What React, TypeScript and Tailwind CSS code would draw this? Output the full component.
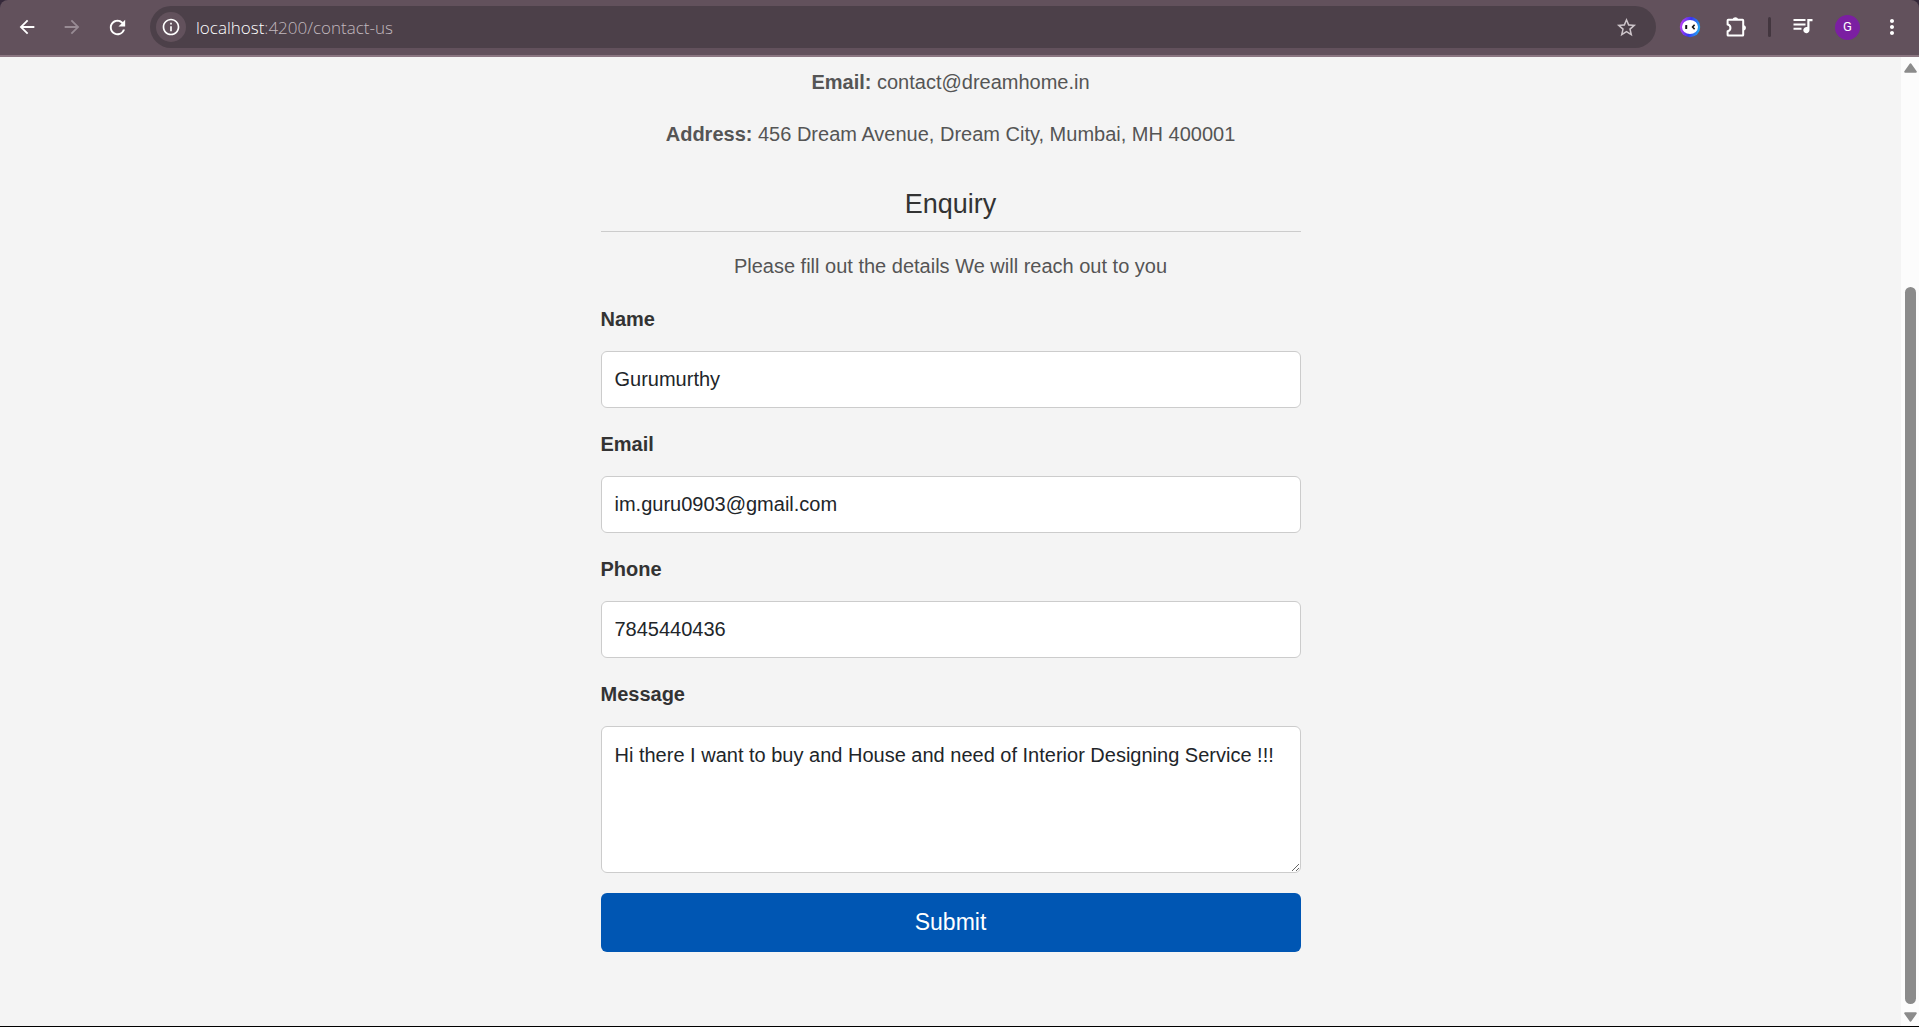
import React from 'react';
import {
  MdArrowBack,
  MdArrowForward,
  MdInfoOutline,
  MdMoreVert,
  MdRefresh,
  MdStarBorder,
} from 'react-icons/md';

function AssistantIcon() {
  return (
    <svg viewBox="0 0 22 22" className="size-[22px]" aria-hidden="true">
      <defs>
        <linearGradient id="ring" x1="0" y1="0.6" x2="1" y2="0.8">
          <stop offset="0" stopColor="#b63df5" />
          <stop offset="0.45" stopColor="#3a35f0" />
          <stop offset="1" stopColor="#19b8f5" />
        </linearGradient>
      </defs>
      <circle cx="11" cy="11" r="10.2" fill="url(#ring)" />
      <ellipse cx="11" cy="11" rx="8" ry="7" fill="#fff" />
      <rect x="6.2" y="9" width="2" height="4" rx="0.6" fill="#111" />
      <path d="M15.6 8.8 L13.6 11 L15.6 13.2" fill="none" stroke="#111" strokeWidth="1.6" />
    </svg>
  );
}

function PuzzleIcon() {
  return (
    <svg viewBox="0 0 24 24" className="size-6" fill="none" aria-hidden="true">
      <path
        d="M4.2 4.8 H18.6 Q19.2 4.8 19.2 5.4 V20 Q19.2 20.6 18.6 20.6 H4.2 Q3.6 20.6 3.6 20 V16.2 C7.4 15.4 7.4 10.4 3.6 9.6 V5.4 Q3.6 4.8 4.2 4.8 Z"
        stroke="#fff"
        strokeWidth="2"
        strokeLinejoin="round"
      />
      <path d="M8.8 4.6 C8.8 1.4 14 1.4 14 4.6 Z M19.4 10.2 C22.8 10.2 22.8 15.4 19.4 15.4 Z" fill="#fff" />
    </svg>
  );
}

function MediaIcon() {
  return (
    <svg viewBox="0 0 24 24" className="size-6" fill="#fff" aria-hidden="true">
      <path d="M2.5 4H14.5V6H2.5Z M2.5 8.4H14.5V10.4H2.5Z M2.5 12.8H10.5V14.8H2.5Z" />
      <path d="M16.3 4H21.5V6.2H18.5V15A3.1 3.1 0 1 1 16.3 12.1Z" />
    </svg>
  );
}

function BrowserBar() {
  return (
    <div className="bg-[#35293a]">
      <header className="flex h-[57px] items-center rounded-t-lg border-b-2 border-[#8b7681] bg-[#62515c] pr-[15px] pb-px pl-4 text-white">
        <nav className="flex items-center gap-[23px]" aria-label="Browser">
          <button type="button" aria-label="Back">
            <MdArrowBack className="size-[22px]" />
          </button>
          <button type="button" aria-label="Forward" className="text-[#988b94]">
            <MdArrowForward className="size-[22px]" />
          </button>
          <button type="button" aria-label="Reload">
            <MdRefresh className="size-[23px]" />
          </button>
        </nav>
        <div className="ml-[21px] flex h-[42px] min-w-0 flex-1 items-center rounded-full bg-[#4c4049] pr-[18px] pl-1.5">
          <button
            type="button"
            aria-label="Site information"
            className="flex size-[30px] items-center justify-center rounded-full bg-[#62515c]"
          >
            <MdInfoOutline className="size-5" />
          </button>
          <p className="ml-2.5 flex-1 pt-0.5 font-['Open_Sans','Noto_Sans',sans-serif] text-[17px] leading-6 font-light text-[#c1b8be]">
            <span className="text-white">localhost</span>:4200/contact-us
          </p>
          <button type="button" aria-label="Bookmark this page" className="text-[#cdc5ca]">
            <MdStarBorder className="size-[23px]" />
          </button>
        </div>
        <div className="ml-[22px] flex items-center gap-5">
          <button type="button" aria-label="Assistant" className="mr-0.5 flex size-6 items-center justify-center">
            <AssistantIcon />
          </button>
          <button type="button" aria-label="Extensions">
            <PuzzleIcon />
          </button>
          <span className="h-5 w-[3px] rounded-full bg-[#43363f]" />
          <button type="button" aria-label="Media controls">
            <MediaIcon />
          </button>
          <button
            type="button"
            aria-label="Profile"
            className="flex size-[25px] items-center justify-center rounded-full bg-[#7b1fa2] font-[Roboto,sans-serif] text-[13px]"
          >
            G
          </button>
          <button type="button" aria-label="Menu">
            <MdMoreVert className="size-6" />
          </button>
        </div>
      </header>
    </div>
  );
}

const fields = [
  { id: 'name', label: 'Name', type: 'text', value: 'Gurumurthy' },
  { id: 'email', label: 'Email', type: 'email', value: 'im.guru0903@gmail.com' },
  { id: 'phone', label: 'Phone', type: 'tel', value: '7845440436' },
];

const labelClass = 'mb-4 block font-bold text-[#333]';
const controlClass =
  'block w-full rounded-md border border-[#ccc] bg-white px-[13px] text-[#212529] outline-none';

function ContactPage() {
  return (
    <main className="flex-1 bg-[#f4f4f4] px-5 pt-[9px] font-['Liberation_Sans',Arial,sans-serif] text-[20px] leading-8">
      <div className="mx-auto max-w-[700px]">
        <section className="text-center text-[#555]">
          <p className="mb-5">
            <strong>Email:</strong> contact@dreamhome.in
          </p>
          <p>
            <strong>Address:</strong> 456 Dream Avenue, Dream City, Mumbai, MH 400001
          </p>
          <h2 className="mt-9 mb-[18px] border-b border-[#ccc] pb-2 text-[27px] leading-[37px] text-[#333]">
            Enquiry
          </h2>
          <p className="mb-[21px]">Please fill out the details We will reach out to you</p>
        </section>
        <form onSubmit={(e) => e.preventDefault()}>
          {fields.map((f) => (
            <div key={f.id} className="mb-5">
              <label htmlFor={f.id} className={labelClass}>
                {f.label}
              </label>
              <input id={f.id} type={f.type} defaultValue={f.value} className={`${controlClass} h-[57px]`} />
            </div>
          ))}
          <label htmlFor="message" className={labelClass}>
            Message
          </label>
          <textarea
            id="message"
            defaultValue="Hi there I want to buy and House and need of Interior Designing Service !!!"
            className={`${controlClass} h-[147px] resize-y py-[13px] leading-[30px]`}
          />
          <button
            type="submit"
            className="mt-5 h-[59px] w-full rounded-md bg-[#0056b3] pb-0.5 text-[23px] text-white"
          >
            Submit
          </button>
        </form>
      </div>
    </main>
  );
}

function ScrollRail() {
  return (
    <div className="flex w-[18px] flex-col items-center bg-[#fcfcfc] pt-1.5 pb-1" aria-hidden="true">
      <svg viewBox="0 0 13 10" className="h-2.5 w-[13px]">
        <path d="M6.5 1.2 L11.8 8.8 H1.2 Z" fill="#8b8b8b" stroke="#8b8b8b" strokeWidth="2" strokeLinejoin="round" />
      </svg>
      <div className="grow-[214]" />
      <div className="mb-2 w-[11px] grow-[717] rounded-full bg-[#8b8b8b]" />
      <svg viewBox="0 0 13 10" className="h-2.5 w-[13px]">
        <path d="M6.5 8.8 L1.2 1.2 H11.8 Z" fill="#8b8b8b" stroke="#8b8b8b" strokeWidth="2" strokeLinejoin="round" />
      </svg>
    </div>
  );
}

export default function App() {
  return (
    <div className="flex min-h-screen flex-col border-b border-black">
      <BrowserBar />
      <div className="flex flex-1">
        <ContactPage />
        <ScrollRail />
      </div>
    </div>
  );
}
